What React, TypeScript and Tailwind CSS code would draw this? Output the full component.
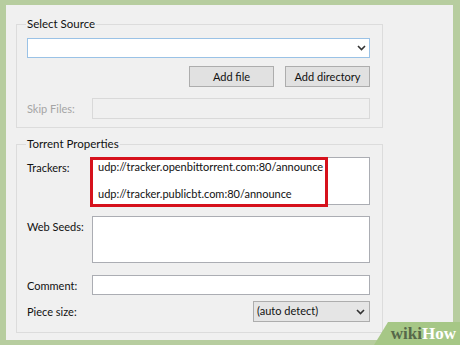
import React from 'react';

const Chevron = () => (
    <svg width="9" height="6" viewBox="0 0 9 6" className="shrink-0">
        <path d="M1 1 L4.5 4.5 L8 1" fill="none" stroke="#333" strokeWidth="1.6" />
    </svg>
);

const Row = ({ label, children, className = '' }: { label: string; children: React.ReactNode; className?: string }) => (
    <div className={`flex ${className}`}>
        <div className="w-[65px] shrink-0 pt-[3px]">{label}</div>
        <div className="flex-1">{children}</div>
    </div>
);

export default function App() {
    return (
        <div
            className="w-[460px] h-[345px] bg-[#b7cd9f] pl-[6px] pt-[5px] pr-[7px] pb-[5px] relative overflow-hidden text-[11px] text-[#111]"
            style={{ fontFamily: 'Lato, "Noto Sans", sans-serif' }}
        >
            <div className="h-full bg-[#f0f0f0] pl-[10px] pt-[10px]">
                {/* Select Source */}
                <fieldset className="w-[367px] border border-[#dcdcdc] pl-[10px] pr-[12px] pb-[8px] pt-[5px]">
                    <legend className="px-[1px] leading-[18px] -ml-[1px] text-[11.5px]">Select Source</legend>
                    <div className="h-[20px] border border-[#9ac2e6] bg-white flex items-center justify-end pr-[3px]">
                        <Chevron />
                    </div>
                    <div className="flex justify-end gap-[11px] mt-[8px]">
                        <button className="w-[85px] h-[21px] border border-[#adadad] bg-[#e1e1e1] leading-none">Add file</button>
                        <button className="w-[85px] h-[21px] border border-[#adadad] bg-[#e1e1e1] leading-none">Add directory</button>
                    </div>
                    <Row label="Skip Files:" className="mt-[11px] text-[#a5a5a5]">
                        <div className="h-[21px] border border-[#d9d9d9] bg-[#f0f0f0]" />
                    </Row>
                </fieldset>

                {/* Torrent Properties */}
                <fieldset className="w-[367px] mt-[7px] border border-[#dcdcdc] pl-[10px] pr-[12px] pb-[10px] pt-[4px]">
                    <legend className="px-[1px] leading-[18px] -ml-[1px] text-[11.5px]">Torrent Properties</legend>
                    <Row label="Trackers:">
                        <div className="relative">
                            <div className="h-[48px] border border-[#abadb3] bg-white pl-[5px] pt-[2px] leading-[13.5px] whitespace-nowrap">
                                <div>udp://tracker.openbittorrent.com:80/announce</div>
                                <div>&nbsp;</div>
                                <div>udp://tracker.publicbt.com:80/announce</div>
                            </div>
                            <div className="absolute -left-[2px] top-0 w-[238px] h-[50px] border-[3px] border-[#d6111c]" />
                        </div>
                    </Row>
                    <Row label="Web Seeds:" className="mt-[11px]">
                        <div className="h-[47px] border border-[#abadb3] bg-white" />
                    </Row>
                    <Row label="Comment:" className="mt-[12px]">
                        <div className="h-[20px] border border-[#abadb3] bg-white" />
                    </Row>
                    <Row label="Piece size:" className="mt-[6px]">
                        <div className="flex justify-end">
                            <div className="w-[117px] h-[21px] border border-[#adadad] bg-[#e5e5e5] flex items-center justify-between pl-[3px] pr-[4px]">
                                <span>(auto detect)</span>
                                <Chevron />
                            </div>
                        </div>
                    </Row>
                </fieldset>
            </div>

            {/* wikiHow watermark */}
            <div className="absolute right-0 bottom-0 w-[86px] h-[23px] bg-[#a6c786] [clip-path:polygon(14px_0,100%_0,100%_100%,0_100%)] flex items-center justify-end pr-[4px]">
                <span className="text-[17px] font-bold leading-none" style={{ fontFamily: '"Liberation Serif", serif' }}>
                    <span className="text-[#56684a]">wiki</span>
                    <span className="text-white">How</span>
                </span>
            </div>
        </div>
    );
}
